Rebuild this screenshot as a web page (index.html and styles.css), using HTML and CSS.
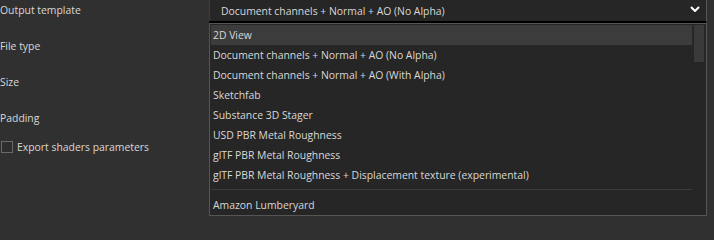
FILE: index.html
```html
<!DOCTYPE html>
<html>
<head>
<meta charset="utf-8">
<link rel="stylesheet" href="styles.css">
</head>
<body>
<div class="page">
  <div class="labels">
    <div class="label">Output template</div>
    <div class="label">File type</div>
    <div class="label">Size</div>
    <div class="label">Padding</div>
    <div class="check-row"><span class="checkbox"></span><span>Export shaders parameters</span></div>
  </div>
  <div class="field">
    <div class="combo">
      <span class="combo-text">Document channels + Normal + AO (No Alpha)</span>
      <svg class="chevron" width="10" height="6" viewBox="0 0 10 6"><path d="M1 1 L5 5 L9 1" fill="none" stroke="#ffffff" stroke-width="2"/></svg>
    </div>
    <div class="combo-line"></div>
    <div class="popup">
      <div class="list">
        <div class="item selected">2D View</div>
        <div class="item">Document channels + Normal + AO (No Alpha)</div>
        <div class="item">Document channels + Normal + AO (With Alpha)</div>
        <div class="item">Sketchfab</div>
        <div class="item">Substance 3D Stager</div>
        <div class="item">USD PBR Metal Roughness</div>
        <div class="item">glTF PBR Metal Roughness</div>
        <div class="item">glTF PBR Metal Roughness + Displacement texture (experimental)</div>
        <div class="separator"></div>
        <div class="item">Amazon Lumberyard</div>
      </div>
      <div class="scroll"><div class="thumb"></div></div>
    </div>
  </div>
</div>
</body>
</html>
```

FILE: styles.css
```css
html, body {
  margin: 0;
  padding: 0;
  background: #303030;
  width: 714px;
  height: 240px;
  overflow: hidden;
}
body {
  font-family: "Open Sans", "Noto Sans", sans-serif;
  font-size: 10.4px;
  color: #d8d8d8;
}
.page {
  display: flex;
  align-items: flex-start;
}
.labels {
  width: 209px;
  display: flex;
  flex-direction: column;
}
.label {
  height: 36px;
  line-height: 20px;
}
.check-row {
  display: flex;
  align-items: center;
  gap: 4px;
  height: 20px;
  margin-top: -7px;
}
.checkbox {
  width: 10px;
  height: 10px;
  border: 1px solid #6a6a6a;
  background: #2e2e2e;
  margin-left: 1px;
}
.field {
  width: 498px;
  display: flex;
  flex-direction: column;
}
.combo {
  height: 21px;
  background: #262626;
  border-left: 1px solid #3c3c3c;
  border-right: 1px solid #5a5a5a;
  display: flex;
  align-items: center;
  justify-content: space-between;
  padding: 0 6px 0 11px;
  box-sizing: border-box;
}
.combo-text {
  line-height: 20px;
}
.chevron {
  display: block;
  margin-top: -3px;
}
.combo-line {
  height: 2px;
  background: #000;
  margin-right: 1px;
}
.popup {
  height: 193px;
  box-sizing: border-box;
  border: 1px solid #555555;
  background: #262626;
  display: flex;
  padding: 1px 1px 0 1px;
}
.list {
  flex: 1;
  display: flex;
  flex-direction: column;
}
.item {
  height: 20px;
  line-height: 21px;
  padding-left: 2px;
  white-space: nowrap;
}
.item.selected {
  background: #3c3c3c;
}
.separator {
  height: 1px;
  background: #3c3c3c;
  margin: 4px 0 5px 0;
}
.scroll {
  width: 13px;
  display: flex;
  justify-content: center;
}
.thumb {
  width: 10px;
  height: 37px;
  background: #3a3a3a;
}
```
